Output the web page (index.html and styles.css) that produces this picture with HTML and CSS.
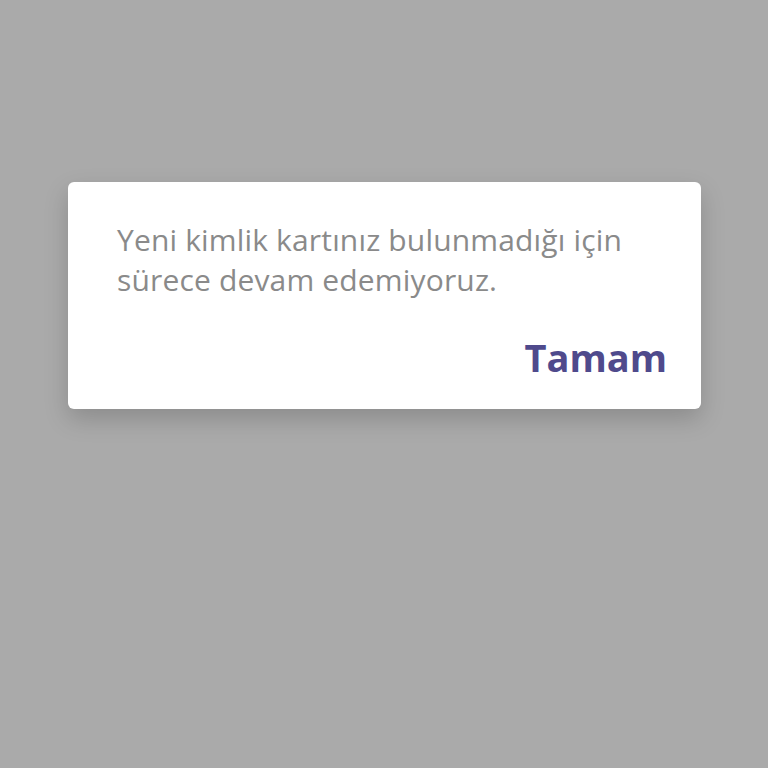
FILE: index.html
```html
<!DOCTYPE html>
<html lang="tr">
<head>
<meta charset="utf-8">
<link rel="stylesheet" href="styles.css">
</head>
<body>
<div class="screen">
  <div class="dialog">
    <p class="message">Yeni kimlik kartınız bulunmadığı için<br>sürece devam edemiyoruz.</p>
    <div class="actions">
      <span class="btn">Tamam</span>
    </div>
  </div>
</div>
</body>
</html>
```
FILE: styles.css
```css
html, body {
  margin: 0;
  padding: 0;
  background: #aaaaaa;
}
.screen {
  width: 768px;
  height: 768px;
  padding-top: 182px;
  padding-left: 68px;
  box-sizing: border-box;
}
.dialog {
  width: 633px;
  height: 227px;
  box-sizing: border-box;
  background: #ffffff;
  border-radius: 6px;
  box-shadow: 0 10px 24px rgba(0,0,0,0.18);
  padding: 0 34px 0 49px;
  display: flex;
  flex-direction: column;
  font-family: "Open Sans", "Liberation Sans", sans-serif;
}
.message {
  margin: 38px 0 0 0;
  font-size: 30px;
  line-height: 40px;
  letter-spacing: 0.16px;
  color: #8a8a8a;
}
.actions {
  display: flex;
  justify-content: flex-end;
  margin-top: 31px;
}
.btn {
  font-size: 38px;
  line-height: 52px;
  font-weight: 700;
  color: #4f4a8c;
}
```
